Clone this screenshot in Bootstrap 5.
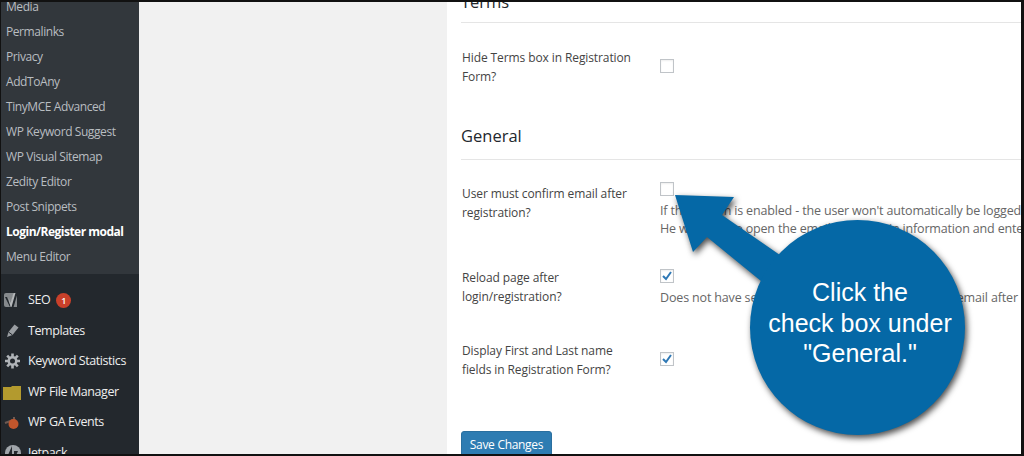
<!DOCTYPE html>
<html lang="en">
<head>
  <meta charset="UTF-8" />
  <meta name="viewport" content="width=device-width, initial-scale=1.0" />
  <title>Login/Register modal settings</title>
  <link href="https://cdn.jsdelivr.net/npm/bootstrap@5.3.3/dist/css/bootstrap.min.css" rel="stylesheet" />
  <script src="https://cdn.jsdelivr.net/npm/bootstrap@5.3.3/dist/js/bootstrap.bundle.min.js"></script>
  <style>
    html, body { height: 456px; overflow: hidden; background: #f1f1f1; }
    body { font-family: "Open Sans", "Noto Sans", sans-serif; font-size: 12px; color: #444; }
    .shot { height: 456px; overflow: hidden; border: solid #111; border-width: 2px 3px 2px 1px; }
    .admin-side { width: 138px; background: #23282d; flex: none; overflow: hidden; }
    .sub-menu { background: #32373c; margin: -8px 0 0; height: 280px; }
    .sub-item { height: 25px; line-height: 25px; padding-left: 5px; color: #b9bdc1; font-size: 12px; letter-spacing: -.42px; white-space: nowrap; }
    .sub-item.current { color: #fff; font-weight: 700; letter-spacing: -.5px; }
    .top-menu { padding-top: 11px; }
    .top-item { height: 30.6px; color: #eee; font-size: 12.5px; letter-spacing: -.42px; white-space: nowrap; }
    .top-icon { width: 27px; flex: none; }
    .top-icon svg { display: block; margin-left: 1px; }
    .seo-count { width: 15px; height: 15px; line-height: 15px; border-radius: 50%; background: #c9402a; color: #fff; font-size: 9px; text-align: center; margin-left: 6px; font-weight: 600; letter-spacing: 0; }
    .gutter { width: 308px; flex: none; background: #f1f1f1; }
    .panel { background: #fff; flex: 1 1 auto; min-width: 0; overflow: hidden; padding-left: 14px; }
    .sec-head { font-size: 16.5px; color: #23282d; border-bottom: 1px solid #e5e5e5; }
    .sec-terms { height: 21px; line-height: 0; overflow: hidden; }
    .sec-general { height: 39px; line-height: 24px; margin-top: 29px; padding-top: 3px; }
    .opt-label { width: 199px; flex: none; margin-top: 1px; padding: 0 20px 0 1px; font-size: 12px; line-height: 18.5px; color: #444; letter-spacing: -.1px; }
    .opt-field { min-width: 0; white-space: nowrap; }
    .opt-note { font-size: 12.5px; line-height: 18px; color: #666; letter-spacing: -.16px; margin-top: 6px; }
    .opt-check.form-check-input { display: block; width: 14px; height: 14px; margin: 0; border: 1px solid #c0c4c8; border-radius: 0; box-shadow: inset 0 1px 2px rgba(0,0,0,.07); }
    .opt-check.form-check-input:checked { background-color: #fff; border-color: #c0c4c8; background-size: 12px; background-image: url("data:image/svg+xml,%3Csvg xmlns='http://www.w3.org/2000/svg' viewBox='0 0 12 12'%3E%3Cpath d='M2 6l3 3 5-7' fill='none' stroke='%232e78b5' stroke-width='2'/%3E%3C/svg%3E"); }
    .row-hide { margin-top: 25px; height: 44px; }
    .row-hide .opt-check { margin-top: 11px; }
    .row-confirm { margin-top: 22px; height: 86px; }
    .row-confirm .opt-label { margin-top: 3px; }
    .row-reload { height: 73px; }
    .row-reload .opt-check { margin-top: 1px; }
    .row-fields { height: 90px; }
    .row-fields .opt-check { margin-top: 11px; }
    .save-btn { --bs-btn-bg: #2e7cb2; --bs-btn-border-color: #2a6f9f; --bs-btn-color: #fff; --bs-btn-font-size: 12px; --bs-btn-border-radius: 3px; --bs-btn-padding-y: 3px; --bs-btn-padding-x: 6px; width: 91px; height: 28px; white-space: nowrap; letter-spacing: -.3px; }
    .callout { position: absolute; left: -1px; top: -2px; filter: drop-shadow(2px 3px 3px rgba(0,0,0,.7)); }
    .callout-text { position: absolute; left: 759px; top: 275px; width: 200px; text-align: center; color: #fff; font-family: "Liberation Sans", Arial, sans-serif; font-size: 25px; line-height: 30.5px; }
  </style>
</head>
<body>
  <div class="shot d-flex position-relative">

    <!-- admin menu -->
    <div class="admin-side">
      <div class="sub-menu">
        <div class="sub-item">Media</div>
        <div class="sub-item">Permalinks</div>
        <div class="sub-item">Privacy</div>
        <div class="sub-item">AddToAny</div>
        <div class="sub-item">TinyMCE Advanced</div>
        <div class="sub-item">WP Keyword Suggest</div>
        <div class="sub-item">WP Visual Sitemap</div>
        <div class="sub-item">Zedity Editor</div>
        <div class="sub-item">Post Snippets</div>
        <div class="sub-item current">Login/Register modal</div>
        <div class="sub-item">Menu Editor</div>
      </div>
      <div class="top-menu">
        <div class="top-item d-flex align-items-center">
          <span class="top-icon"><svg width="20" height="20" viewBox="0 0 20 20"><path d="M4 3h11v14H4a2 2 0 0 1-2-2V5a2 2 0 0 1 2-2z" fill="#85898c"/><path d="M5 7l3.500 9L12 2h4l-5 17H7l1 -2-5-10z" fill="#23282d"/><path d="M6.500 7.500l2 5.500L11.500 3h2l-4 14H8.500" fill="#b5b8ba"/></svg></span>
          SEO <span class="seo-count">1</span>
        </div>
        <div class="top-item d-flex align-items-center">
          <span class="top-icon"><svg width="20" height="20" viewBox="0 0 20 20"><path d="M5 16l1.500-5 6-7.500 4 3-6 7.500z" fill="#9a9ea2"/><path d="M6.500 11l4 3" stroke="#23282d"/></svg></span>
          Templates
        </div>
        <div class="top-item d-flex align-items-center">
          <span class="top-icon"><svg width="20" height="20" viewBox="0 0 20 20"><path d="M10.500 2.500v15M3 10h15M5.200 4.700l10.600 10.600M15.800 4.700L5.200 15.300" stroke="#b0b4b8" stroke-width="2.600"/><circle cx="10.500" cy="10" r="5" fill="#b0b4b8"/><circle cx="10.500" cy="10" r="2.500" fill="#23282d"/></svg></span>
          Keyword Statistics
        </div>
        <div class="top-item d-flex align-items-center">
          <span class="top-icon"><svg width="20" height="20" viewBox="0 0 20 20"><path d="M1 5h8l1-1h9v14H1z" fill="#b39a2e"/></svg></span>
          WP File Manager
        </div>
        <div class="top-item d-flex align-items-center">
          <span class="top-icon"><svg width="20" height="20" viewBox="0 0 20 20"><path d="M3 10l8-3M12 4v3" stroke="#6e5a52" stroke-width="2"/><circle cx="11.500" cy="11" r="5" fill="#c2562c"/></svg></span>
          WP GA Events
        </div>
        <div class="top-item d-flex align-items-center">
          <span class="top-icon"><svg width="20" height="20" viewBox="0 0 20 20"><circle cx="11" cy="10" r="8" fill="#a0a5aa"/><path d="M10 3v9H6zM12 8v9l4-9z" fill="#23282d"/></svg></span>
          Jetpack
        </div>
      </div>
    </div>
    <div class="gutter"></div>

    <!-- settings panel -->
    <div class="panel">
      <div class="sec-head sec-terms">Terms</div>
      <div class="d-flex row-hide">
        <div class="opt-label">Hide Terms box in Registration Form?</div>
        <div class="opt-field"><input class="form-check-input opt-check" type="checkbox" /></div>
      </div>
      <div class="sec-head sec-general">General</div>
      <div class="d-flex row-confirm">
        <div class="opt-label">User must confirm email after registration?</div>
        <div class="opt-field">
          <input class="form-check-input opt-check" type="checkbox" />
          <div class="opt-note">If this option is enabled - the user won't automatically be logged in<br />He will have to open the email, find a login information and enter it</div>
        </div>
      </div>
      <div class="d-flex row-reload">
        <div class="opt-label">Reload page after login/registration?</div>
        <div class="opt-field">
          <input class="form-check-input opt-check" type="checkbox" checked />
          <div class="opt-note">Does not have sense if the user needs to confirm by email after registration</div>
        </div>
      </div>
      <div class="d-flex row-fields">
        <div class="opt-label">Display First and Last name fields in Registration Form?</div>
        <div class="opt-field"><input class="form-check-input opt-check" type="checkbox" checked /></div>
      </div>
      <button class="btn btn-primary save-btn" type="button">Save Changes</button>
    </div>

    <!-- callout over the page -->
    <svg class="callout" width="1024" height="456" viewBox="0 0 1024 456">
      <path d="M675 195L734 197 722 215 790 262 772 290 707 237 693 252Z" fill="#0568a6"/>
      <circle cx="857.500" cy="327.500" r="107.500" fill="#0568a6"/>
    </svg>
    <div class="callout-text">Click the<br />check box under<br />"General."</div>
  </div>
</body>
</html>
